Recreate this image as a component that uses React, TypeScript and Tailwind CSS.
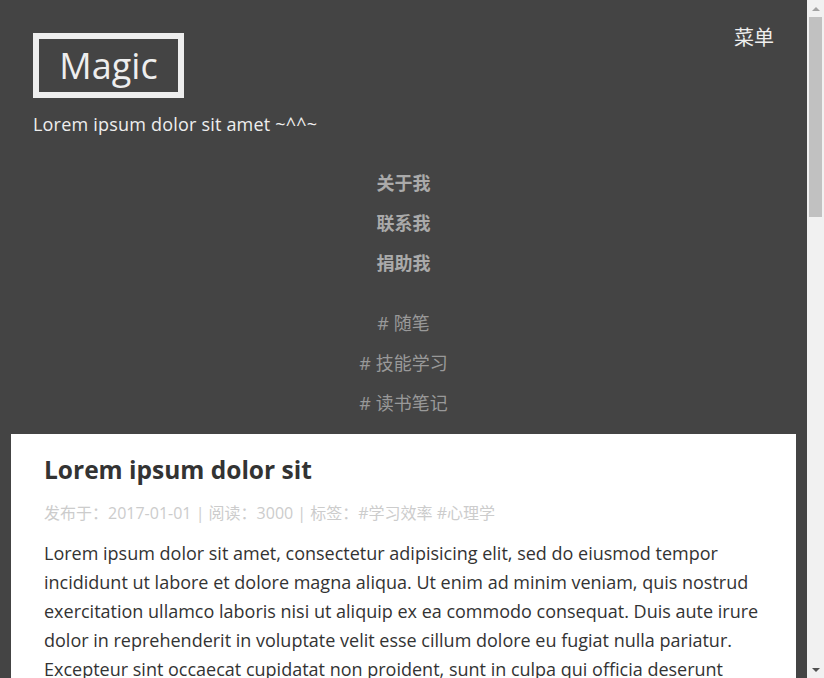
import type React from "react"

const font = "font-['Open_Sans','Noto_Sans_CJK_SC',sans-serif]"

const ScrollBar: React.FC = () => (
  <div className="flex h-screen w-[17px] shrink-0 flex-col bg-[#f1f1f1]">
    <div className="flex h-[17px] items-center justify-center">
      <div className="h-0 w-0 border-x-[4px] border-b-[4px] border-x-transparent border-b-[#a3a3a3]" />
    </div>
    <div className="mx-[2px] h-[200px] bg-[#c1c1c1]" />
    <div className="flex-1" />
    <div className="flex h-[17px] items-center justify-center">
      <div className="h-0 w-0 border-x-[4px] border-t-[4px] border-x-transparent border-t-[#505050]" />
    </div>
  </div>
)

const App: React.FC = () => {
  return (
    <div className={`flex h-screen overflow-hidden bg-[#444] ${font}`}>
      <div className="min-w-0 flex-1 pb-[11px]">
        {/* Header */}
        <header className="flex justify-between px-[33px] pt-[33px]">
          <div>
            <div className="inline-flex h-[65px] w-[151px] items-center justify-center border-[6px] border-[#eee]">
              <span className="text-[36px] leading-none text-[#eee]">Magic</span>
            </div>
            <p className="mt-[14px] text-[18px] leading-[25px] tracking-[0.2px] text-[#eee]">
              Lorem ipsum dolor sit amet ~^^~
            </p>
          </div>
          <button className="-mt-[10px] h-[30px] text-[20px] text-[#eee]">菜单</button>
        </header>

        {/* Nav */}
        <nav className="mt-[26px] text-center text-[18px] leading-[40px]">
          <ul className="font-bold text-[#aaa]">
            <li>关于我</li>
            <li>联系我</li>
            <li>捐助我</li>
          </ul>
          <ul className="mt-[20px] text-[#999]">
            <li># 随笔</li>
            <li># 技能学习</li>
            <li># 读书笔记</li>
          </ul>
        </nav>

        {/* Post */}
        <article className="mx-[11px] mt-[11px] bg-white px-[33px] pt-[18px] pb-[30px]">
          <h1 className="text-[24.5px] font-bold leading-[36px] text-[#333]">Lorem ipsum dolor sit</h1>
          <p className="mt-[13px] text-[16px] leading-[24px] text-[#ccc]">
            发布于：2017-01-01 | 阅读：3000 | 标签：#学习效率 #心理学
          </p>
          <p className="mt-[14px] text-[18px] leading-[29px] text-[#333]">
            Lorem ipsum dolor sit amet, consectetur adipisicing elit, sed do eiusmod tempor incididunt ut labore et
            dolore magna aliqua. Ut enim ad minim veniam, quis nostrud exercitation ullamco laboris nisi ut aliquip ex
            ea commodo consequat. Duis aute irure dolor in reprehenderit in voluptate velit esse cillum dolore eu fugiat
            nulla pariatur. Excepteur sint occaecat cupidatat non proident, sunt in culpa qui officia deserunt mollit
            anim id est laborum.
          </p>
        </article>
      </div>
      <ScrollBar />
    </div>
  )
}

export default App
